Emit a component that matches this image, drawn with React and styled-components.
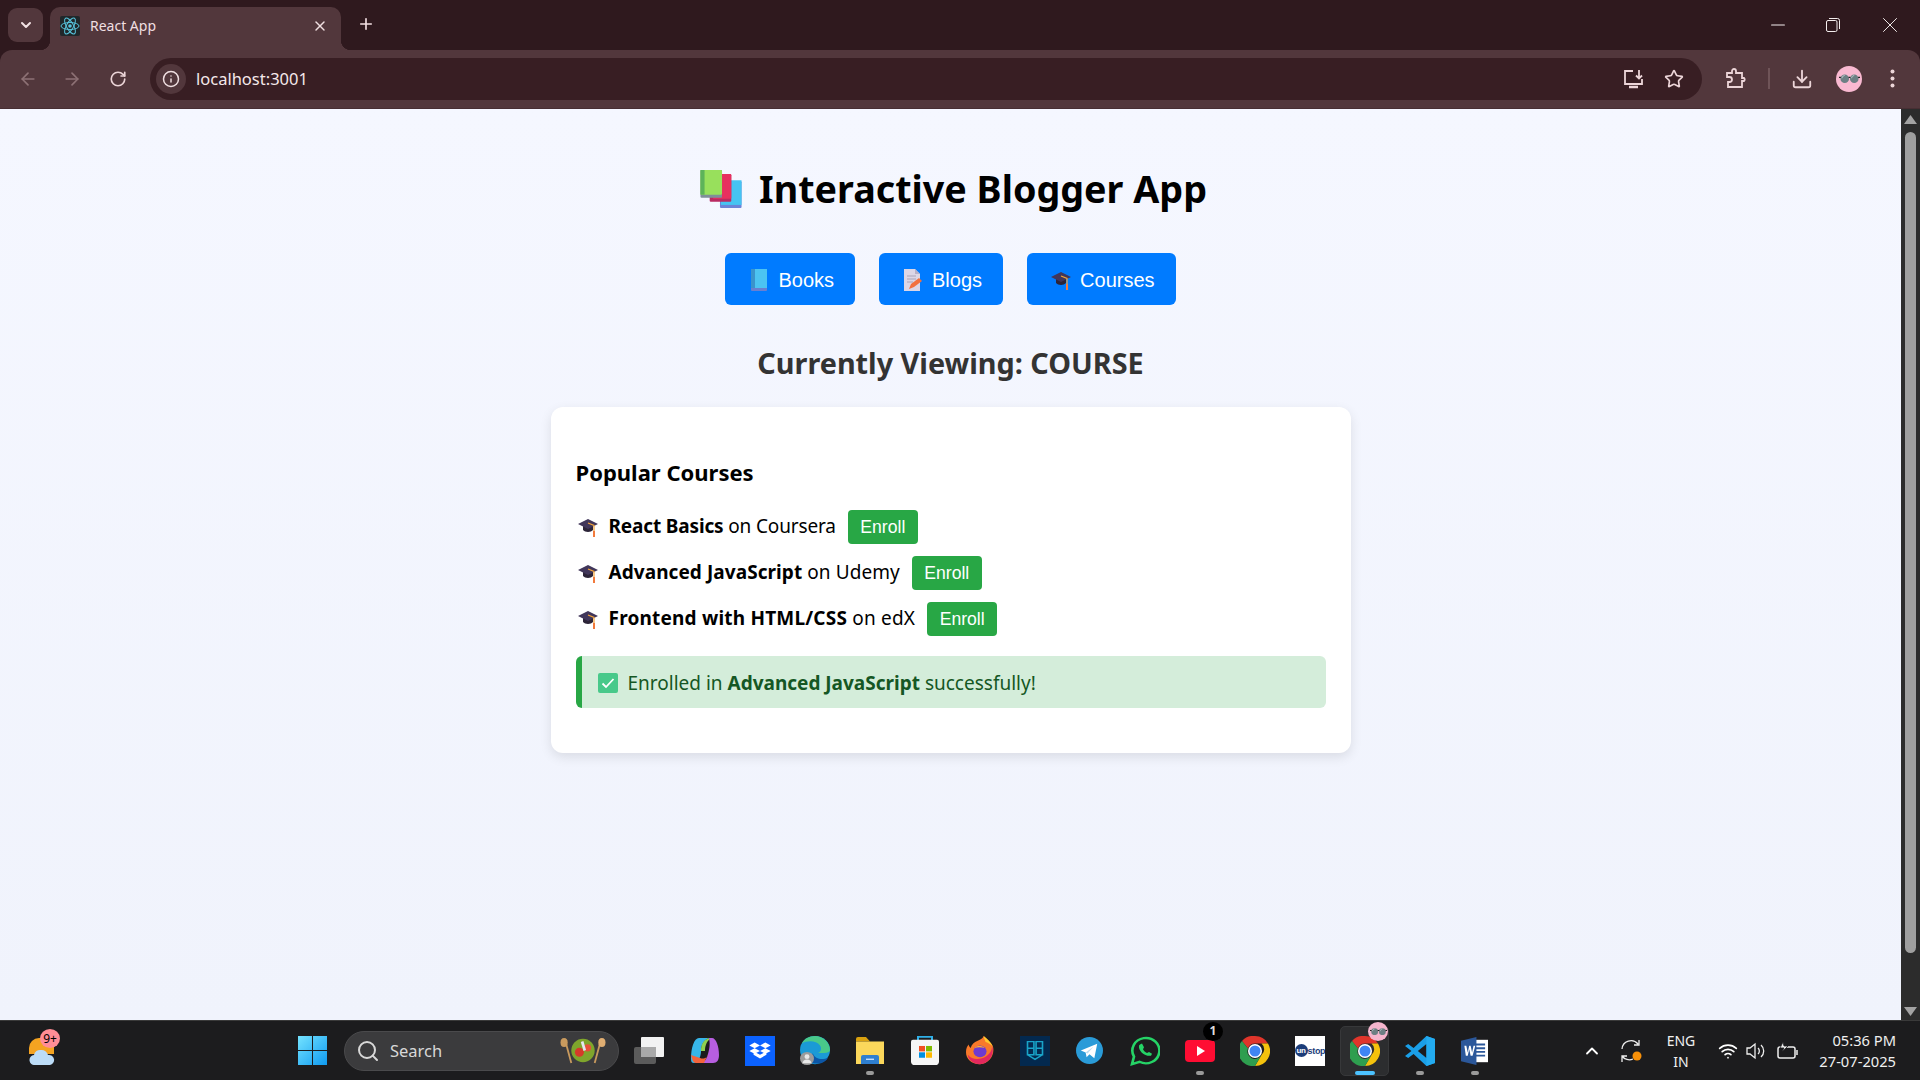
import React from 'react';
import styled, { createGlobalStyle } from 'styled-components';
import { ArrowLeft, ArrowRight, RotateCw, Info, Star, Download, Plus, X, ChevronDown, ChevronUp, Minus, Search, Wifi } from 'lucide-react';

const Global = createGlobalStyle`
  html, body { margin: 0; padding: 0; width: 100%; height: 100%; overflow: hidden; }
  body { font-family: "Noto Sans", "Open Sans", sans-serif; background: #f4f7ff; }
  * { box-sizing: border-box; }
`;

const Screen = styled.div`
  width: 1920px;
  height: 1080px;
  display: flex;
  flex-direction: column;
  overflow: hidden;
  background: #2f191e;
`;

const TabStrip = styled.div`
  height: 50px;
  background: #2f191e;
  display: flex;
  align-items: flex-end;
  padding-left: 8px;
  flex-shrink: 0;
`;

const TabSearch = styled.div`
  width: 35px;
  height: 34px;
  margin-bottom: 8px;
  border-radius: 9px;
  background: #52373c;
  color: #f3e2e4;
  display: flex;
  align-items: center;
  justify-content: center;
`;

const Tab = styled.div`
  position: relative;
  width: 291px;
  height: 43px;
  margin-left: 7px;
  padding: 0 13px 6px 10px;
  background: #52373c;
  border-radius: 10px 10px 0 0;
  color: #f0dfe1;
  font-size: 14px;
  display: flex;
  align-items: center;
  gap: 10px;
  &::before, &::after {
    content: '';
    position: absolute;
    bottom: 0;
    width: 10px;
    height: 10px;
  }
  &::before { left: -10px; background: radial-gradient(circle at 0 0, transparent 10px, #52373c 10.5px); }
  &::after { right: -10px; background: radial-gradient(circle at 100% 0, transparent 10px, #52373c 10.5px); }
`;

const TabTitle = styled.span`
  flex: 1;
`;

const NewTab = styled.div`
  margin: 0 0 12px 16px;
  height: 28px;
  color: #f3dfe2;
  display: flex;
  align-items: center;
`;

const WindowControls = styled.div`
  margin-left: auto;
  height: 50px;
  align-self: flex-start;
  display: flex;
  align-items: center;
  color: #f4eeee;
`;

const WindowButton = styled.div`
  width: ${(p) => p.$w || 55}px;
  display: flex;
  justify-content: center;
`;

const Toolbar = styled.div`
  height: 59px;
  flex-shrink: 0;
  background: #52373c;
  border-radius: 12px 12px 0 0;
  border-bottom: 1px solid #472e33;
  display: flex;
  align-items: center;
  padding: 0 0 1px 6px;
  color: #e7cfd2;
`;

const NavButton = styled.div`
  width: ${(p) => p.$w || 44}px;
  flex-shrink: 0;
  display: flex;
  justify-content: center;
  color: ${(p) => (p.$dim ? '#8d7175' : '#ecd5d8')};
`;

const AddressBar = styled.div`
  width: 1552px;
  flex-shrink: 0;
  height: 42px;
  margin-left: 8px;
  border-radius: 21px;
  background: #381e23;
  display: flex;
  align-items: center;
  padding: 0 8px 0 6px;
`;

const SiteInfo = styled.div`
  width: 30px;
  height: 30px;
  border-radius: 50%;
  background: #52373c;
  color: #f0dfe1;
  display: flex;
  align-items: center;
  justify-content: center;
`;

const Url = styled.span`
  flex: 1;
  margin-left: 10px;
  font-size: 16.5px;
  color: #f5e8ea;
`;

const Divider = styled.div`
  width: 2px;
  height: 21px;
  background: #6f5458;
  flex-shrink: 0;
`;

const Avatar = styled.div`
  width: 26px;
  height: 26px;
  border-radius: 50%;
  background: #f9b9d1;
  display: flex;
  align-items: center;
  justify-content: center;
`;

const Content = styled.div`
  flex: 1;
  display: flex;
  min-height: 0;
`;

const Page = styled.main`
  flex: 1;
  background: linear-gradient(#f5f7ff, #f0f3fc);
  padding-top: 46px;
  display: flex;
  flex-direction: column;
  align-items: center;
`;

const Title = styled.h1`
  margin: 0;
  padding-left: 6px;
  font-size: 37.7px;
  line-height: 68px;
  height: 68px;
  font-weight: 700;
  color: #000;
  display: flex;
  align-items: center;
  gap: 17px;
`;

const Nav = styled.nav`
  margin-top: 30px;
  display: flex;
  gap: 24px;
`;

const NavPill = styled.button`
  height: 52px;
  padding: 2px 21px 0 21px;
  border: none;
  border-radius: 6px;
  background: #007bff;
  color: #fff;
  font-family: "Liberation Sans", Arial, sans-serif;
  font-size: 20px;
  display: flex;
  align-items: center;
  gap: 6px;
`;

const EmojiSlot = styled.span`
  width: 26px;
  display: flex;
  justify-content: center;
`;

const Viewing = styled.h2`
  margin: 36px 0 0;
  font-size: 28.8px;
  line-height: 44px;
  font-weight: 700;
  color: #333;
`;

const Card = styled.section`
  margin-top: 22px;
  width: 800px;
  height: 346px;
  background: #fff;
  border-radius: 12px;
  box-shadow: 0 4px 12px rgba(0, 0, 0, 0.1);
  padding: 45px 25px 0 25px;
`;

const CardTitle = styled.h3`
  margin: 0 0 18px;
  font-size: 22px;
  line-height: 40px;
  font-weight: 700;
  color: #000;
`;

const CourseList = styled.ul`
  list-style: none;
  margin: 0;
  padding: 0;
  display: flex;
  flex-direction: column;
  gap: 12px;
`;

const CourseRow = styled.li`
  height: 34px;
  display: flex;
  align-items: center;
  font-size: 19px;
  color: #000;
  padding-left: 2px;
`;

const RowText = styled.span`
  margin: 0 12px 0 11px;
  position: relative;
  top: -1px;
  white-space: pre;
  letter-spacing: ${(p) => p.$tracking}px;
`;

const EnrollButton = styled.button`
  width: 70px;
  height: 34px;
  border: none;
  border-radius: 4px;
  background: #28a745;
  color: #fff;
  font-family: "Liberation Sans", Arial, sans-serif;
  font-size: 17.6px;
  padding: 0;
`;

const Alert = styled.div`
  margin-top: 20px;
  height: 52px;
  background: #d4edda;
  border-left: 6px solid #28a745;
  border-radius: 6px;
  color: #155724;
  font-size: 19px;
  display: flex;
  align-items: center;
  gap: 10px;
  padding: 1px 0 0 16px;
  white-space: pre;
`;

const Scrollbar = styled.div`
  width: 19px;
  flex-shrink: 0;
  background: #2c2c2c;
  display: flex;
  flex-direction: column;
  align-items: center;
  padding-top: 6px;
`;

const Thumb = styled.div`
  width: 11px;
  height: 821px;
  margin: 8px 0 54px;
  flex-shrink: 0;
  border-radius: 6px;
  background: #9f9f9f;
`;

const Taskbar = styled.footer`
  height: 60px;
  flex-shrink: 0;
  background: #1c1c1e;
  border-top: 1px solid #3a3a3a;
  display: flex;
  align-items: center;
  padding-left: 285px;
  position: relative;
  color: #fff;
`;

const Weather = styled.div`
  position: absolute;
  left: 29px;
  top: 17px;
  width: 27px;
  height: 27px;
`;

const CountBadge = styled.span`
  position: absolute;
  left: 11px;
  top: -9px;
  width: 20px;
  height: 19px;
  border-radius: 50%;
  background: #ff8d96;
  color: #000;
  font-size: 12px;
  text-align: center;
  line-height: 19px;
`;

const TaskItem = styled.div`
  position: relative;
  flex-shrink: 0;
  width: ${(p) => p.$w || 55}px;
  height: 52px;
  display: flex;
  align-items: center;
  justify-content: center;
`;

const ActiveTile = styled.div`
  position: absolute;
  inset: 1px 3px 1px 3px;
  border-radius: 5px;
  background: #2c2d2f;
  border: 1px solid #37383a;
`;

const IconLayer = styled.span`
  position: relative;
  display: flex;
`;

const RunDot = styled.span`
  position: absolute;
  bottom: 2px;
  left: 50%;
  transform: translateX(-50%);
  width: ${(p) => (p.$active ? 20 : 8)}px;
  height: 4px;
  border-radius: 2px;
  background: ${(p) => (p.$active ? '#4cc2ff' : '#9a9a9a')};
`;

const SearchBox = styled.div`
  width: 275px;
  height: 40px;
  margin: 0 2px 0 4px;
  flex-shrink: 0;
  border-radius: 20px;
  background: #3b3b3d;
  border: 1px solid #4a4a4c;
  display: flex;
  align-items: center;
  padding: 0 10px 0 11px;
  gap: 10px;
  color: #d8d8d8;
  font-size: 16.5px;
`;

const SearchLabel = styled.span`
  flex: 1;
`;

const AppBubble = styled.span`
  position: absolute;
  top: -3px;
  right: 4px;
  width: 20px;
  height: 19px;
  border-radius: 50%;
  background: ${(p) => p.$bg};
  display: flex;
  align-items: center;
  justify-content: center;
`;

const BubbleCount = styled.span`
  color: #ddd;
  font-size: 12px;
  font-weight: 700;
  line-height: 1;
`;

const UnstopTile = styled.div`
  width: 30px;
  height: 30px;
  background: #fff;
  overflow: hidden;
  display: flex;
  align-items: center;
  color: #1c3d7a;
  font-family: "Liberation Sans", Arial, sans-serif;
  font-size: 9px;
  font-weight: 700;
  letter-spacing: -0.3px;
  white-space: nowrap;
`;

const UnstopMark = styled.span`
  flex-shrink: 0;
  width: 13px;
  height: 13px;
  border-radius: 50%;
  background: #1c3d7a;
  color: #fff;
  font-size: 8px;
  line-height: 13px;
  text-align: center;
`;

const Tray = styled.div`
  margin-left: auto;
  display: flex;
  align-items: center;
  height: 100%;
  flex-shrink: 0;
`;

const TrayIcon = styled.div`
  width: ${(p) => p.$w}px;
  display: flex;
  justify-content: center;
`;

const Lang = styled.div`
  width: 50px;
  margin: 0 6px 0 4px;
  font-size: 14px;
  line-height: 21px;
  text-align: center;
  color: #f0f0f0;
`;

const Clock = styled.div`
  width: 112px;
  padding-right: 24px;
  font-size: 14.7px;
  line-height: 21px;
  text-align: right;
  color: #f0f0f0;
  white-space: nowrap;
`;

const BooksIcon = () => (
  <svg width="42" height="38" viewBox="0 0 40 37">
    <rect x="19" y="11" width="21" height="26" rx="1" fill="#6a84d8" />
    <rect x="20" y="10" width="20" height="24" fill="#46c4f2" />
    <rect x="9" y="4" width="21" height="27" rx="1" fill="#b92a62" />
    <rect x="12" y="4" width="18" height="24" rx="1" fill="#e7305f" />
    <rect x="0" y="0" width="21" height="27" rx="1" fill="#7f8f99" />
    <rect x="0" y="0" width="21" height="24" rx="1" fill="#98e05c" />
    <rect x="0" y="0" width="4" height="24" fill="#5db35a" />
  </svg>
);

const BookIcon = () => (
  <svg width="18" height="22" viewBox="0 0 18 22">
    <rect x="1" y="1" width="16" height="21" rx="1" fill="#6a7fd0" />
    <rect x="1" y="0" width="16" height="19" fill="#4cc4f2" />
    <rect x="1" y="0" width="4" height="19" fill="#3a94cc" />
  </svg>
);

const MemoIcon = () => (
  <svg width="20" height="22" viewBox="0 0 20 22">
    <path d="M1 0h11l5 5v17H1z" fill="#dcd6e6" />
    <path d="M12 0l5 5h-5z" fill="#b8b0c6" />
    <path d="M4 7h9M4 10h9M4 13h6" stroke="#aaa3b8" strokeWidth="1.2" />
    <path d="M6 20l2-5 8-6 3 3-8 6z" fill="#f2703f" />
  </svg>
);

const CapIcon = ({ size = 20 }) => (
  <svg width={size} height={size} viewBox="0 0 20 20">
    <path d="M5 8v5c2 2.500 8 2.500 10 0V8z" fill="#2c2438" />
    <path d="M0 7l10-5 10 5-10 5z" fill="#41365a" />
    <path d="M10 6l6 2.500V16" fill="none" stroke="#f3a63c" strokeWidth="1.2" />
    <rect x="15" y="14" width="2" height="6" fill="#f27a3d" />
  </svg>
);

const CheckIcon = () => (
  <svg width="20" height="20" viewBox="0 0 20 20">
    <rect width="20" height="20" rx="2" fill="#48c98a" />
    <path d="M4.500 10.500l3.500 3.500 7.500-8" fill="none" stroke="#fff" strokeWidth="1.8" />
  </svg>
);

const ReactIcon = () => (
  <svg width="20" height="20" viewBox="0 0 20 20">
    <rect width="20" height="20" rx="2" fill="#20272a" />
    <g fill="none" stroke="#58c4dc" strokeWidth="1">
      <ellipse cx="10" cy="10" rx="9" ry="3.500" />
      <ellipse cx="10" cy="10" rx="9" ry="3.500" transform="rotate(60 10 10)" />
      <ellipse cx="10" cy="10" rx="9" ry="3.500" transform="rotate(120 10 10)" />
    </g>
    <circle cx="10" cy="10" r="1.800" fill="#58c4dc" />
  </svg>
);

const InstallIcon = () => (
  <svg width="21" height="20" viewBox="0 0 21 20" fill="none" stroke="currentColor" strokeWidth="1.800">
    <path d="M10 2H2v13h17v-5" />
    <path d="M6 18h9" strokeWidth="2.500" />
    <path d="M16 1v8M13 6.500l3 3 3-3" />
  </svg>
);

const PuzzleIcon = () => (
  <svg width="21" height="21" viewBox="0 0 21 21" fill="none" stroke="currentColor" strokeWidth="1.800">
    <path d="M2 5h5V3a2 2 0 0 1 4 0v2h6v5h2a2 2 0 0 1 0 3h-2v6H3v-5h1.500a2.500 2.500 0 0 0 0-5H2z" />
  </svg>
);

const Glasses = ({ w = 21 }) => (
  <svg width={w} height={w * 0.5} viewBox="0 0 22 11">
    <circle cx="6" cy="6" r="4.500" fill="#6d7f84" />
    <circle cx="16" cy="6" r="4.500" fill="#6d7f84" />
    <path d="M6 2.500a3.500 3.500 0 0 0-3 3M16 2.500a3.500 3.500 0 0 0-3 3" stroke="#b9c6c9" fill="none" />
    <path d="M0 4.500h2M10 4.500h2M20 4.500h2" stroke="#222" strokeWidth="1.400" />
  </svg>
);

const KebabIcon = () => (
  <svg width="5" height="19" viewBox="0 0 5 19" fill="currentColor">
    <circle cx="2.500" cy="2.500" r="2" />
    <circle cx="2.500" cy="9.500" r="2" />
    <circle cx="2.500" cy="16.500" r="2" />
  </svg>
);

const RestoreIcon = () => (
  <svg width="14" height="14" viewBox="0 0 14 14" fill="none" stroke="currentColor">
    <rect x="0.500" y="2.500" width="10.500" height="11" rx="1.500" />
    <path d="M3 .5h8.500a2 2 0 0 1 2 2V11" />
  </svg>
);

const ScrollArrow = ({ down }) => (
  <svg width="13" height="9" viewBox="0 0 13 9" style={{ flexShrink: 0 }}>
    <path d={down ? 'M0 0h13L6.500 9z' : 'M6.500 0L13 9H0z'} fill="#a3a3a3" />
  </svg>
);

const CloudSun = () => (
  <svg width="27" height="27" viewBox="0 0 27 27">
    <path d="M10 0h14a3 3 0 0 1 1 3v13H0V10A10 10 0 0 1 10 0z" fill="#f4a321" />
    <path d="M6 27a5 5 0 0 1-1-10 6 6 0 0 1 7-5 6.500 6.500 0 0 1 7 5 5 5 0 0 1 2 10z" fill="#bcdcf7" />
  </svg>
);

const WindowsLogo = () => (
  <svg width="29" height="29" viewBox="0 0 28 28">
    <defs>
      <linearGradient id="win" x1="0" y1="0" x2="1" y2="1">
        <stop offset="0" stopColor="#74e3ff" />
        <stop offset="1" stopColor="#0f9af0" />
      </linearGradient>
    </defs>
    <path d="M0 0h13.500v13.500H0zM14.500 0H28v13.500H14.500zM0 14.500h13.500V28H0zM14.500 14.500H28V28H14.500z" fill="url(#win)" />
  </svg>
);

const SaladArt = () => (
  <svg width="50" height="27" viewBox="0 0 50 30">
    <path d="M5 3l7 26" stroke="#c89a5e" strokeWidth="2" />
    <path d="M45 3l-7 26" stroke="#c89a5e" strokeWidth="2" />
    <ellipse cx="4" cy="6" rx="4" ry="5" fill="#c89a5e" />
    <ellipse cx="46" cy="6" rx="4" ry="5" fill="#e0ae72" />
    <circle cx="25" cy="15" r="13" fill="#7fa52c" />
    <circle cx="21" cy="17" r="5" fill="#d63a2a" />
    <circle cx="30" cy="12" r="4" fill="#e6503a" />
    <path d="M24 5l3 10" stroke="#e6e6f2" strokeWidth="3" />
  </svg>
);

const TaskViewIcon = () => (
  <svg width="30" height="27" viewBox="0 0 30 27">
    <rect x="0" y="10" width="22" height="17" rx="2" fill="#5b5b5b" />
    <rect x="7" y="0" width="23" height="20" rx="1" fill="#f2f2f2" />
    <rect x="7" y="10" width="15" height="10" fill="#a9a9a9" />
  </svg>
);

const CopilotIcon = () => (
  <svg width="28" height="26" viewBox="0 0 28 26">
    <path d="M8 0h10c-6 2-8 8-8 13s-2 11-7 12c-2 0-3-1-3-4C0 10 3 0 8 0z" fill="#37b6e9" />
    <path d="M10 13c0-6 2-11 8-13l1 1c-4 3-5 8-5 12z" fill="#8fd14f" />
    <path d="M18 0h3c4 0 7 8 7 17 0 5-2 8-6 8H10c4-1 6-5 7-9 2-7 2-11 1-16z" fill="#b75ee0" />
    <path d="M0 17c1 4 2 8 5 8h8l4-9c-1 5-5 5-8 4z" fill="#f4643c" />
  </svg>
);

const DropboxIcon = () => (
  <svg width="30" height="30" viewBox="0 0 28 32" preserveAspectRatio="none">
    <rect width="28" height="32" fill="#0b62ff" />
    <path d="M9 7l5 3-5 3-5-3zM19 7l5 3-5 3-5-3zM9 13l5 3-5 3-5-3zM19 13l5 3-5 3-5-3zM14 20l5-3 1 1v2l-6 4-6-4v-2l1-1z" fill="#fff" />
  </svg>
);

const EdgeIcon = () => (
  <svg width="30" height="30" viewBox="0 0 30 32" preserveAspectRatio="none">
    <circle cx="15" cy="15" r="15" fill="#1b9ad6" />
    <path d="M30 15c0-8-7-15-15-15C9 0 4 3 2 8c4-3 14-4 18 2 2 3 1 7-2 8h6c4 0 6-1 6-3z" fill="#49c98a" />
    <path d="M5 20c0 6 8 11 16 9 3-1 6-3 7-6-5 3-13 2-15-4z" fill="#0c56a6" />
    <circle cx="7" cy="24" r="7" fill="#9b9b9b" />
    <circle cx="7" cy="22" r="2.500" fill="#e8e8e8" />
    <path d="M2.500 29a4.500 4 0 0 1 9 0z" fill="#e8e8e8" />
  </svg>
);

const FolderIcon = () => (
  <svg width="30" height="27" viewBox="0 0 30 30" preserveAspectRatio="none">
    <path d="M1 2a2 2 0 0 1 2-2h8l4 5H1z" fill="#d9a10f" />
    <rect x="1" y="5" width="28" height="25" fill="#fbd75b" />
    <path d="M6 22a2 2 0 0 1 2-2h14a2 2 0 0 1 2 2v8H6z" fill="#2f7fd0" />
    <rect x="11" y="24" width="8" height="1.500" fill="#c9e2ff" />
  </svg>
);

const StoreIcon = () => (
  <svg width="28" height="29" viewBox="0 0 28 32" preserveAspectRatio="none">
    <path d="M7 5V1h14v4" fill="none" stroke="#2fb0e8" strokeWidth="2" />
    <path d="M0 6a2 2 0 0 1 2-2h24a2 2 0 0 1 2 2v22a4 4 0 0 1-4 4H4a4 4 0 0 1-4-4z" fill="#f6f6f6" />
    <rect x="8" y="11" width="6" height="6" fill="#f25022" />
    <rect x="15" y="11" width="6" height="6" fill="#7fba00" />
    <rect x="8" y="18" width="6" height="6" fill="#0090e0" />
    <rect x="15" y="18" width="6" height="6" fill="#ffb900" />
  </svg>
);

const FirefoxIcon = () => (
  <svg width="28" height="29" viewBox="0 0 30 34" preserveAspectRatio="none">
    <path d="M15 33C6 33 0 27 0 19c0-4 1-7 3-9 0 2 1 3 2 4 1-4 4-7 7-8 3-2 6-3 7-6 2 3 8 7 10 13 2 10-5 20-14 20z" fill="#f9792a" />
    <path d="M15 33C8 33 2 28 2 22c4 6 12 6 18 3 5-3 8-8 8-13 3 10-4 21-13 21z" fill="#e2285e" />
    <path d="M19 0c3 3 8 7 10 13-2-3-5-5-8-6-1-3-2-5-2-7z" fill="#ffca2e" />
    <circle cx="15" cy="18" r="7" fill="#6e3ad1" />
    <path d="M9 14c3-3 8-3 11 0-3-1-8-1-11 0z" fill="#ffb02e" />
  </svg>
);

const DarkAppIcon = () => (
  <svg width="30" height="30" viewBox="0 0 28 32" preserveAspectRatio="none">
    <rect width="28" height="32" fill="#03294f" />
    <path d="M7 6h6v14H7zM15 6h6v14h-6zM7 20l7 5 7-5M7 13h6M15 13h6" fill="none" stroke="#19a4c9" strokeWidth="1.500" />
  </svg>
);

const TelegramIcon = () => (
  <svg width="27" height="27" viewBox="0 0 28 28">
    <circle cx="14" cy="14" r="14" fill="#2a9bd8" />
    <path d="M5 14l17-7-3 15-5-4-3 3-1-5z" fill="#fff" />
    <path d="M10 16l8-6-6 7z" fill="#b9dcf0" />
  </svg>
);

const WhatsappIcon = () => (
  <svg width="30" height="30" viewBox="0 0 30 32" preserveAspectRatio="none">
    <path d="M2 30l2-8A13.500 13.500 0 1 1 9.500 27.500z" fill="none" stroke="#25d366" strokeWidth="2.600" />
    <path d="M10 9l2-1 2 4-1 2c1 2 2 3 4 4l2-1 3 2-1 2c-6 1-13-5-12-11z" fill="#25d366" />
  </svg>
);

const YoutubeIcon = () => (
  <svg width="30" height="22" viewBox="0 0 30 22">
    <rect width="30" height="22" rx="4" fill="#ff0d33" />
    <path d="M12 6l8 5-8 5z" fill="#fff" />
  </svg>
);

const ChromeIcon = ({ size = 30 }) => (
  <svg width={size} height={size} viewBox="0 0 30 30">
    <path d="M15 0a15 15 0 0 1 13 7.500H15a7.500 7.500 0 0 0-7 5L2 5A15 15 0 0 1 15 0z" fill="#e0352b" />
    <path d="M28 7.500A15 15 0 0 1 15 30l6.500-11a7.500 7.500 0 0 0 0-11.500z" fill="#f4c20d" />
    <path d="M2 5a15 15 0 0 0 13 25l6.500-11a7.500 7.500 0 0 1-13.500-6.500z" fill="#2e9e4f" />
    <circle cx="15" cy="15" r="7" fill="#fff" />
    <circle cx="15" cy="15" r="5.500" fill="#3f85f4" />
  </svg>
);

const VscodeIcon = () => (
  <svg width="30" height="30" viewBox="0 0 28 30" preserveAspectRatio="none">
    <path d="M20 0l8 3v24l-8 3L8 18l-5 4-3-2 6-5-6-5 3-2 5 4z" fill="#1a9fe8" />
    <path d="M20 8l-8 7 8 7z" fill="#1c1c1e" />
    <path d="M20 0l8 3v24l-8 3z" fill="#23abf0" />
  </svg>
);

const WordIcon = () => (
  <svg width="27" height="28" viewBox="0 0 28 30" preserveAspectRatio="none">
    <rect x="9" y="3" width="19" height="24" fill="#fff" />
    <path d="M14 8h11M14 12h11M14 16h11M14 20h11" stroke="#2b579a" strokeWidth="2" />
    <path d="M0 4l16-4v30L0 26z" fill="#2b579a" />
    <path d="M3.500 9.500h2l1.500 7 1.500-7h1.500l1.500 7 1.500-7h1.800L12 20h-2l-1.500-7L7 20H5z" fill="#fff" />
  </svg>
);

const SyncIcon = () => (
  <svg width="22" height="24" viewBox="0 0 22 24" fill="none" stroke="#eee" strokeWidth="1.300">
    <path d="M1 10a9 9 0 0 1 16-5M18 1v5h-5M12 20a9 9 0 0 1-11-3M1 23v-6h5" />
    <circle cx="16" cy="17" r="4.500" fill="#f79009" stroke="none" />
  </svg>
);

const VolumeIcon = () => (
  <svg width="20" height="18" viewBox="0 0 20 18" fill="none" stroke="#eee" strokeWidth="1.300">
    <path d="M1 6h3l5-4v14l-5-4H1zM12 6a4 4 0 0 1 0 6M15 3a8 8 0 0 1 0 12" />
  </svg>
);

const BatteryIcon = () => (
  <svg width="22" height="20" viewBox="0 0 22 20" fill="none" stroke="#eee" strokeWidth="1.500">
    <rect x="1" y="6" width="17" height="11" rx="2" />
    <path d="M20 9v5" />
    <path d="M6 1L3 7h4l-2 4 6-6H7z" fill="#eee" stroke="#1c1c1e" strokeWidth="0.800" />
  </svg>
);

const courses = [
  { id: 1, name: 'React Basics', site: 'Coursera', tracking: -0.15 },
  { id: 2, name: 'Advanced JavaScript', site: 'Udemy', tracking: 0.07 },
  { id: 3, name: 'Frontend with HTML/CSS', site: 'edX', tracking: 0.2 },
];

const apps = [
  { key: 'copilot', icon: <CopilotIcon /> },
  { key: 'dropbox', icon: <DropboxIcon /> },
  { key: 'edge', icon: <EdgeIcon /> },
  { key: 'files', icon: <FolderIcon />, running: true },
  { key: 'store', icon: <StoreIcon /> },
  { key: 'firefox', icon: <FirefoxIcon /> },
  { key: 'dark', icon: <DarkAppIcon /> },
  { key: 'telegram', icon: <TelegramIcon /> },
  { key: 'whatsapp', icon: <WhatsappIcon /> },
  {
    key: 'youtube',
    icon: <YoutubeIcon />,
    running: true,
    bubble: <AppBubble $bg="#000"><BubbleCount>1</BubbleCount></AppBubble>,
  },
  { key: 'chrome', icon: <ChromeIcon /> },
  {
    key: 'unstop',
    icon: <UnstopTile><UnstopMark>un</UnstopMark>stop</UnstopTile>,
  },
];

export default function App() {
  return (
    <Screen>
      <Global />
      <TabStrip>
        <TabSearch><ChevronDown size={16} strokeWidth={3} /></TabSearch>
        <Tab>
          <ReactIcon />
          <TabTitle>React App</TabTitle>
          <X size={16} strokeWidth={2.2} />
        </Tab>
        <NewTab><Plus size={18} strokeWidth={2.2} /></NewTab>
        <WindowControls>
          <WindowButton><Minus size={22} strokeWidth={1.1} /></WindowButton>
          <WindowButton><RestoreIcon /></WindowButton>
          <WindowButton $w={60}><X size={26} strokeWidth={0.9} /></WindowButton>
        </WindowControls>
      </TabStrip>
      <Toolbar>
        <NavButton $dim><ArrowLeft size={20} /></NavButton>
        <NavButton $dim><ArrowRight size={20} /></NavButton>
        <NavButton $w={48}><RotateCw size={18} strokeWidth={2.2} /></NavButton>
        <AddressBar>
          <SiteInfo><Info size={18} /></SiteInfo>
          <Url>localhost:3001</Url>
          <NavButton $w={42}><InstallIcon /></NavButton>
          <NavButton $w={40}><Star size={20} /></NavButton>
        </AddressBar>
        <NavButton $w={66}><PuzzleIcon /></NavButton>
        <Divider />
        <NavButton $w={64}><Download size={22} /></NavButton>
        <NavButton $w={30}><Avatar><Glasses /></Avatar></NavButton>
        <NavButton $w={56}><KebabIcon /></NavButton>
      </Toolbar>
      <Content>
        <Page>
          <Title><BooksIcon />Interactive Blogger App</Title>
          <Nav>
            <NavPill><EmojiSlot><BookIcon /></EmojiSlot>Books</NavPill>
            <NavPill><EmojiSlot><MemoIcon /></EmojiSlot>Blogs</NavPill>
            <NavPill><EmojiSlot><CapIcon /></EmojiSlot>Courses</NavPill>
          </Nav>
          <Viewing>Currently Viewing: COURSE</Viewing>
          <Card>
            <CardTitle>Popular Courses</CardTitle>
            <CourseList>
              {courses.map((course) => (
                <CourseRow key={course.id}>
                  <CapIcon />
                  <RowText $tracking={course.tracking}><b>{course.name}</b> on {course.site}</RowText>
                  <EnrollButton>Enroll</EnrollButton>
                </CourseRow>
              ))}
            </CourseList>
            <Alert>
              <CheckIcon />
              <span>Enrolled in <b>Advanced JavaScript</b> successfully!</span>
            </Alert>
          </Card>
        </Page>
        <Scrollbar>
          <ScrollArrow />
          <Thumb />
          <ScrollArrow down />
        </Scrollbar>
      </Content>
      <Taskbar>
        <Weather>
          <CloudSun />
          <CountBadge>9+</CountBadge>
        </Weather>
        <TaskItem><WindowsLogo /></TaskItem>
        <SearchBox>
          <Search size={24} />
          <SearchLabel>Search</SearchLabel>
          <SaladArt />
        </SearchBox>
        <TaskItem $w={56}><TaskViewIcon /></TaskItem>
        {apps.map((app) => (
          <TaskItem key={app.key}>
            {app.icon}
            {app.bubble}
            {app.running && <RunDot />}
          </TaskItem>
        ))}
        <TaskItem>
          <ActiveTile />
          <IconLayer><ChromeIcon /></IconLayer>
          <AppBubble $bg="#f6b5cd"><Glasses w={17} /></AppBubble>
          <RunDot $active />
        </TaskItem>
        <TaskItem><VscodeIcon /><RunDot /></TaskItem>
        <TaskItem><WordIcon /><RunDot /></TaskItem>
        <Tray>
          <TrayIcon $w={40}><ChevronUp size={20} strokeWidth={2.2} /></TrayIcon>
          <TrayIcon $w={40}><SyncIcon /></TrayIcon>
          <Lang>ENG<br />IN</Lang>
          <TrayIcon $w={32}><Wifi size={20} /></TrayIcon>
          <TrayIcon $w={24}><VolumeIcon /></TrayIcon>
          <TrayIcon $w={40}><BatteryIcon /></TrayIcon>
          <Clock>05:36 PM<br />27-07-2025</Clock>
        </Tray>
      </Taskbar>
    </Screen>
  );
}
